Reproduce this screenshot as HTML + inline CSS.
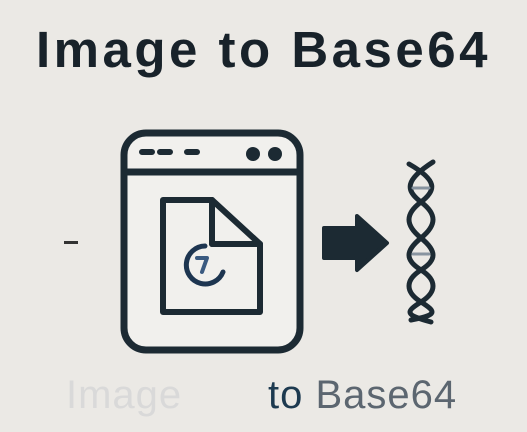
<!DOCTYPE html><html><head><style>
body{margin:0;width:527px;height:432px;background:#ebe9e5;overflow:hidden;position:relative;font-family:"Liberation Sans",sans-serif}
.t{position:absolute;left:0;width:527px;top:20px;text-align:center;font-size:51px;font-weight:bold;color:#18222a;letter-spacing:3.5px}
.b{position:absolute;top:373px;font-size:40px;letter-spacing:1px}
</style></head><body>
<div class="t">Image to Base64</div>
<svg width="527" height="432" style="position:absolute;left:0;top:0">
<g fill="none" stroke="#1c2a33" stroke-width="7" stroke-linecap="round" stroke-linejoin="round">
<rect x="124" y="133" width="176" height="217" rx="22" fill="#f1f0ed"/>
<line x1="126" y1="172" x2="298" y2="172"/>
<path d="M142 152h10M160 152h10M187 152h10" stroke-width="6"/>
<path d="M163 200H212V244H260V312H163Z" stroke-width="6"/>
<path d="M212 200L260 244" stroke-width="6"/>
<path d="M212 200V244H260" stroke-width="6"/>
<path d="M205 246a19 19 0 1 0 18 26" stroke-width="5" stroke="#1d3550"/>
<path d="M197 258h10l-5 14" stroke-width="4" stroke="#3a5a80"/>
<path d="M433 162C405 180 405 190 421 202S437 225 421 238S405 260 421 270S437 292 421 302S405 315 431 322" stroke-width="5"/>
<path d="M409 164C437 180 437 190 421 202S405 225 421 238S437 260 421 270S405 292 421 302S437 315 411 320" stroke-width="5"/>
<path d="M413 188h16M413 254h16" stroke-width="3" stroke="#8894a0"/>
</g>
<circle cx="253" cy="154" r="7" fill="#1c2a33"/><circle cx="275" cy="154" r="7" fill="#1c2a33"/>
<path d="M324 228h33v-12l30 27-30 27v-12h-33z" fill="#1c2a33" stroke="#1c2a33" stroke-width="4" stroke-linejoin="round"/>
<rect x="64" y="241" width="14" height="3" fill="#333"/>
</svg>
<div class="b" style="left:66px;color:#d9d9d9">Image</div>
<div class="b" style="left:268px;color:#5c6670"><span style="color:#1d3a50">to</span> Base64</div>
</body></html>
